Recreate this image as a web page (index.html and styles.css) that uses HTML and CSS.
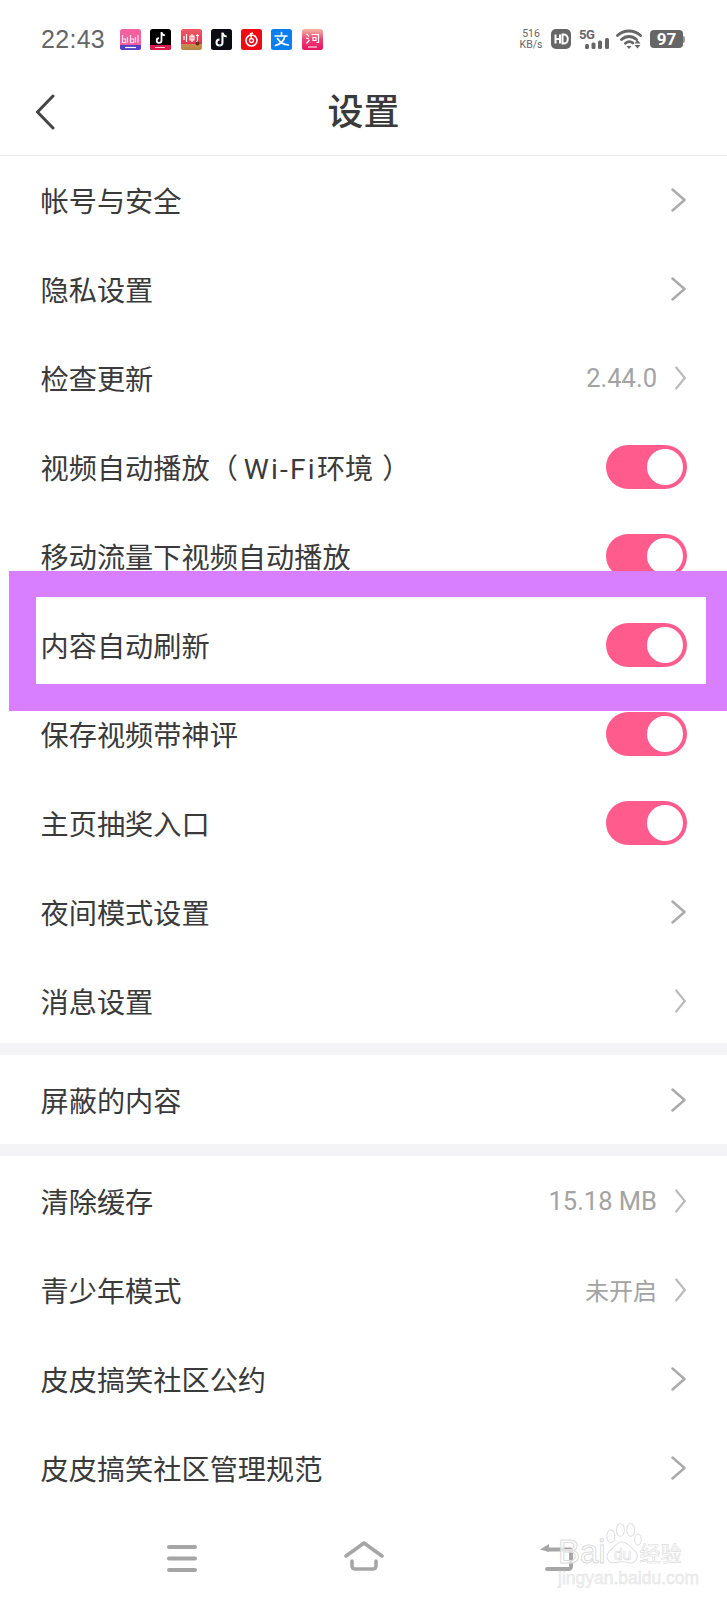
FILE: index.html
```html
<!DOCTYPE html>
<html lang="zh-CN">
<head>
<meta charset="UTF-8">
<meta name="viewport" content="width=device-width, initial-scale=1.0">
<title>设置</title>
<link rel="stylesheet" href="styles.css">
</head>
<body>

<svg class="defs" width="0" height="0">
  <defs>
    <linearGradient id="taobao" x1="0" y1="0" x2="0" y2="1"><stop offset="0" stop-color="#f8b8a4"/><stop offset=".5" stop-color="#ee3f74"/><stop offset="1" stop-color="#e8125e"/></linearGradient>
    <linearGradient id="redbook" x1="0" y1="0" x2="0" y2="1"><stop offset="0" stop-color="#ee5a66"/><stop offset=".7" stop-color="#e63350"/><stop offset=".72" stop-color="#c4914e"/><stop offset="1" stop-color="#b98344"/></linearGradient>
  </defs>
  <symbol id="chevron" viewBox="0 0 15 24"><path d="M1.5 1.5 13.5 12 1.5 22.5" fill="none" stroke="currentColor" stroke-width="2.4" stroke-linecap="round" stroke-linejoin="round"/></symbol>
  <symbol id="chevron-thin" viewBox="0 0 11 24"><path d="M1.2 1.5 9.8 12 1.2 22.5" fill="none" stroke="currentColor" stroke-width="2.2" stroke-linecap="round" stroke-linejoin="round"/></symbol>
</svg>

<div class="status-bar">
  <span class="clock">22:43</span>
  <div class="app-icons">
    <svg class="app" viewBox="0 0 21 21"><rect width="21" height="21" rx="2.500" fill="#f6609f"/><path d="M0 16h21v2.500a2.500 2.500 0 0 1-2.500 2.500h-16A2.500 2.500 0 0 1 0 18.500z" fill="#5340c4"/><path d="M2.500 6v7.500h3.200V10H3M7.500 8v5.500M10.500 6v7.500h3.200V10H11M15.500 8v5.500M18 6v7.500" fill="none" stroke="#ffe3f0" stroke-width="1.100"/><path d="M5 18.500h11" stroke="#fff" stroke-width="1.200"/></svg>
    <svg class="app" viewBox="0 0 21 21"><rect width="21" height="21" rx="2.500" fill="#000"/><path d="M0 16h21v2.500a2.500 2.500 0 0 1-2.500 2.500h-16A2.500 2.500 0 0 1 0 18.500z" fill="#e0184a"/><path d="M11.500 3v8.500a2.400 2.400 0 1 1-2.400-2.400M11.500 3.200c.4 1.900 1.600 2.900 3.400 3.100" fill="none" stroke="#fff" stroke-width="1.800"/><path d="M5 18.500h10" stroke="#ffd0d8" stroke-width="1"/></svg>
    <svg class="app" viewBox="0 0 21 21"><rect width="21" height="21" rx="2.500" fill="url(#redbook)"/><path d="M3 7v4M5.500 5v8M9 7h4v4H9zM11 5v8M15 6.500h3M16.500 5v7l-1 1" fill="none" stroke="#fff" stroke-width="1.200"/><circle cx="16.500" cy="14.500" r="2" fill="#5f3518"/></svg>
    <svg class="app" viewBox="0 0 21 21"><rect width="21" height="21" rx="2.500" fill="#0b0b14"/><path d="M11.500 3.500v10a3 3 0 1 1-3-3M11.500 3.700c.5 2.300 2 3.500 4.200 3.700" fill="none" stroke="#fff" stroke-width="2"/><path d="M10.500 4v9.500a2.500 2.500 0 0 1-2.500 3" fill="none" stroke="#3ad6e0" stroke-width=".7"/></svg>
    <svg class="app" viewBox="0 0 21 21"><rect width="21" height="21" rx="2.500" fill="#ee0a14"/><circle cx="10.500" cy="11.500" r="5.500" fill="none" stroke="#fff" stroke-width="1.600"/><circle cx="10.500" cy="11.500" r="2" fill="none" stroke="#fff" stroke-width="1.300"/><path d="M12 3.800 9.500 4.800 10.500 9.500" fill="none" stroke="#fff" stroke-width="1.400"/></svg>
    <svg class="app" viewBox="0 0 21 21"><rect width="21" height="21" rx="2.500" fill="#0a7ff0"/><path d="M4 7h12M10.500 3.500V7M14 7c-1 4.500-4 8-9.500 9.500M6.500 9.500c2 3.500 6 6 11 6.500" fill="none" stroke="#fff" stroke-width="1.600" stroke-linecap="round"/></svg>
    <svg class="app" viewBox="0 0 21 21"><rect width="21" height="21" rx="2.500" fill="url(#taobao)"/><path d="M4.500 5c1.500.8 2 1.500 2.500 2.500M4 9l3 1M4.500 14.500 7.500 11M9.500 5.500h7v8h-2M11 8.500h3v3h-3zM6 18h9" fill="none" stroke="#fff" stroke-width="1.200"/></svg>
  </div>
  <div class="status-right">
    <div class="speed"><span>516</span><span>KB/s</span></div>
    <svg class="hd" viewBox="0 0 20 20"><rect width="20" height="20" rx="5" fill="#666"/><path d="M4.500 5.500v9M9 5.500v9M4.500 10H9M11.500 5.500v9h1.500c5 0 5-9 0-9z" fill="none" stroke="#fff" stroke-width="2"/></svg>
    <div class="signal">
      <span class="five-g">5G</span>
      <svg class="bars" viewBox="0 0 24 11"><rect x="0" y="6" width="4" height="5" rx="1.500"/><rect x="6.500" y="4.500" width="4" height="6.500" rx="1.500"/><rect x="13" y="2.500" width="4" height="8.500" rx="1.500"/><rect x="20" y="0" width="4" height="11" rx="1.500"/></svg>
    </div>
    <svg class="wifi" viewBox="0 0 27 20"><path d="M1.500 6.500C8 .5 18 .5 24.500 6.500M5.500 10.500c4.500-4 10.500-4 15 0M9.500 14.300c2.300-2 5-2 7.300-.4" fill="none" stroke="#666" stroke-width="2.800" stroke-linecap="round"/><path d="M10.500 17h5L13 20zM18.500 14.500h6l-3-3.500zM18.500 16h6l-3 3.500z" fill="#666"/></svg>
    <div class="battery"><span class="battery-level">97</span><span class="battery-nub"></span></div>
  </div>
</div>

<div class="top-bar">
  <svg class="back" viewBox="0 0 20 36"><path d="M18 2 2.500 18 18 34" fill="none" stroke="#444" stroke-width="3" stroke-linecap="round" stroke-linejoin="round"/></svg>
  <h1>设置</h1>
</div>

<div class="section first">
  <div class="row"><span class="label">帐号与安全</span><svg class="chev"><use href="#chevron"/></svg></div>
  <div class="row"><span class="label">隐私设置</span><svg class="chev"><use href="#chevron"/></svg></div>
  <div class="row"><span class="label">检查更新</span><span class="value">2.44.0</span><svg class="chev thin"><use href="#chevron-thin"/></svg></div>
  <div class="row"><span class="label">视频自动播放（<span class="latin">Wi-Fi</span>环境<span class="gap"> </span>）</span><span class="toggle"></span></div>
  <div class="row"><span class="label">移动流量下视频自动播放</span><span class="toggle"></span></div>
  <div class="row"><span class="label">内容自动刷新</span><span class="toggle"></span></div>
  <div class="row"><span class="label">保存视频带神评</span><span class="toggle"></span></div>
  <div class="row"><span class="label">主页抽奖入口</span><span class="toggle"></span></div>
  <div class="row"><span class="label">夜间模式设置</span><svg class="chev"><use href="#chevron"/></svg></div>
  <div class="row"><span class="label">消息设置</span><svg class="chev thin"><use href="#chevron-thin"/></svg></div>
</div>

<div class="section">
  <div class="row"><span class="label">屏蔽的内容</span><svg class="chev"><use href="#chevron"/></svg></div>
</div>

<div class="section">
  <div class="row"><span class="label">清除缓存</span><span class="value">15.18 MB</span><svg class="chev thin"><use href="#chevron-thin"/></svg></div>
  <div class="row"><span class="label">青少年模式</span><span class="value small">未开启</span><svg class="chev thin"><use href="#chevron-thin"/></svg></div>
  <div class="row"><span class="label">皮皮搞笑社区公约</span><svg class="chev"><use href="#chevron"/></svg></div>
  <div class="row"><span class="label">皮皮搞笑社区管理规范</span><svg class="chev"><use href="#chevron"/></svg></div>
</div>

<div class="nav-bar">
  <svg class="nav-menu" viewBox="0 0 30 27"><path d="M2 2h26M2 13.500h26M2 25h26" fill="none" stroke="#a6a6a6" stroke-width="4" stroke-linecap="round"/></svg>
  <svg class="nav-home" viewBox="0 0 40 30"><path d="M2 15 20 2l18 13M8 20v5a3 3 0 0 0 3 3h18a3 3 0 0 0 3-3v-5" fill="none" stroke="#a6a6a6" stroke-width="3.600" stroke-linecap="round" stroke-linejoin="round"/></svg>
  <svg class="nav-return" viewBox="0 0 34 28"><path d="M9 6.500h23v17a2.500 2.500 0 0 1-2.500 2.500H8" fill="none" stroke="#a6a6a6" stroke-width="4" stroke-linecap="round" stroke-linejoin="round"/><path d="M10 1 1 6.500 10 9z" fill="#a6a6a6"/></svg>
</div>

<!-- annotation drawn over the screenshot -->
<div class="highlight"></div>

<div class="watermark">
  <svg class="paw" viewBox="0 0 50 52"><g fill="#fff" fill-opacity=".7" stroke="#e0e0e0" stroke-width="1.300"><ellipse cx="11" cy="17" rx="5" ry="8"/><ellipse cx="23" cy="9" rx="5" ry="8"/><ellipse cx="36" cy="9" rx="5" ry="8"/><ellipse cx="45" cy="21" rx="4" ry="7"/><path d="M25 24c-7 0-10 7-16 12-6 6-1 15 6 14 6-1 13-2 19 0 8 2 13-7 8-14-6-5-10-12-17-12z"/></g></svg>
  <div class="mark-line"><span class="mark-bai">Bai</span><span class="mark-du">du</span><span class="mark-cn">经验</span></div>
  <div class="mark-url">jingyan.baidu.com</div>
</div>

</body>
</html>
```

FILE: styles.css
```css
* {
  box-sizing: border-box;
}

html, body {
  margin: 0;
  height: 100%;
}

body {
  position: relative;
  width: 727px;
  height: 1600px;
  overflow: hidden;
  display: flex;
  flex-direction: column;
  background: #fff;
  color: #333;
  font-family: Roboto, "Noto Sans CJK SC", sans-serif;
}

.defs {
  position: absolute;
}

/* status bar */
.status-bar {
  height: 78px;
  flex: none;
  display: flex;
  align-items: center;
  padding: 0 42px 0 41px;
  color: #666;
}

.clock {
  width: 79px;
  font-family: "Liberation Sans", sans-serif;
  font-size: 25px;
  letter-spacing: 0.3px;
}

.app-icons {
  display: flex;
  gap: 9.3px;
}

.app {
  width: 21px;
  height: 21px;
}

.status-right {
  margin-left: auto;
  display: flex;
  align-items: center;
}

.speed {
  width: 24px;
  display: flex;
  flex-direction: column;
  align-items: center;
  font-size: 10.5px;
  line-height: 11px;
  margin-right: 8px;
  white-space: nowrap;
}

.hd {
  width: 20px;
  height: 20px;
  margin-right: 8px;
}

.signal {
  position: relative;
  width: 30px;
  height: 20px;
  margin-right: 7px;
}

.five-g {
  position: absolute;
  left: 0;
  top: -2px;
  font-size: 13px;
  font-weight: 700;
  letter-spacing: -0.5px;
}

.bars {
  position: absolute;
  right: 0;
  bottom: 0;
  width: 24px;
  height: 11px;
  fill: #666;
}

.wifi {
  width: 27px;
  height: 20px;
  margin-right: 7px;
}

.battery {
  display: flex;
  align-items: center;
}

.battery-level {
  width: 33px;
  height: 18px;
  border-radius: 4px;
  background: #666;
  color: #fff;
  font-size: 17px;
  line-height: 18px;
  font-weight: 700;
  text-align: center;
}

.battery-nub {
  width: 2px;
  height: 7px;
  background: #999;
  border-radius: 0 2px 2px 0;
}

/* title */
.top-bar {
  position: relative;
  height: 78px;
  flex: none;
  display: flex;
  align-items: center;
  justify-content: center;
  padding-bottom: 8px;
  border-bottom: 1px solid #eee;
}

.top-bar h1 {
  margin: 0;
  font-size: 36px;
  line-height: 46px;
  font-weight: 500;
  color: #3a3a3a;
}

.back {
  position: absolute;
  left: 35px;
  top: 16px;
  width: 20px;
  height: 36px;
}

/* rows */
.section {
  flex: none;
  border-top: 12px solid #f4f4f7;
}

.section.first {
  border-top: 0;
  margin-top: -1px;
  margin-bottom: -2px;
}

.row {
  height: 89px;
  display: flex;
  align-items: center;
  padding: 0 41px 0 40.5px;
}

.label {
  font-size: 28.2px;
  color: #3a3a3a;
  white-space: pre;
}

.latin {
  margin-left: 6px;
  letter-spacing: 2.2px;
}

.gap {
  display: inline-block;
  width: 9px;
}

.value {
  margin-left: auto;
  margin-right: 18px;
  font-size: 25.5px;
  color: #a3a3a3;
}

.value.small {
  font-size: 24px;
}

.chev {
  width: 15px;
  height: 24px;
  margin-left: auto;
  color: #aaa;
}

.chev.thin {
  width: 11px;
  color: #bbb;
}

.value + .chev {
  margin-left: 0;
}

.toggle {
  position: relative;
  margin-left: auto;
  margin-right: -1px;
  width: 81px;
  height: 44px;
  border-radius: 22px;
  background: #ff5c8d;
}

.toggle::after {
  content: "";
  position: absolute;
  right: 4px;
  top: 4px;
  width: 36px;
  height: 36px;
  border-radius: 50%;
  background: #fff;
}

/* bottom navigation */
.nav-bar {
  margin-top: auto;
  height: 88px;
  flex: none;
  position: relative;
  display: flex;
  align-items: flex-start;
  padding: 32px 0 0 167px;
}

.nav-menu {
  width: 30px;
  height: 27px;
  margin-top: 1px;
}

.nav-home {
  width: 40px;
  height: 30px;
  margin-left: 147px;
  margin-top: -3px;
}

.nav-return {
  width: 34px;
  height: 28px;
  margin-left: 155px;
  margin-top: -1px;
}

/* overlays */
.highlight {
  position: absolute;
  left: 9px;
  top: 571px;
  width: 718px;
  height: 140px;
  border: solid #d87fff;
  border-width: 26px 21px 27px 27px;
}

.watermark {
  position: absolute;
  left: 558px;
  top: 1522px;
  width: 132px;
  height: 62px;
  font-family: "Liberation Sans", sans-serif;
  color: rgba(255, 255, 255, 0.7);
  -webkit-text-stroke: 1px #dcdcdc;
}

.paw {
  position: absolute;
  left: 44px;
  top: 0;
  width: 40px;
  height: 43px;
}

.mark-line {
  position: absolute;
  left: 0;
  top: 17px;
  width: 132px;
  height: 26px;
  line-height: 26px;
  display: flex;
}

.mark-bai {
  font-size: 33px;
}

.mark-du {
  margin-left: 8px;
  margin-top: 3px;
  font-size: 16px;
  -webkit-text-stroke: 0.6px #dcdcdc;
}

.mark-cn {
  margin-left: 8px;
  font-family: "Noto Sans CJK SC", sans-serif;
  font-size: 21px;
  -webkit-text-stroke: 0.6px #dcdcdc;
  white-space: nowrap;
}

.mark-url {
  position: absolute;
  left: 0;
  top: 48px;
  line-height: 16px;
  font-size: 17.5px;
  color: #f0f0f0;
  -webkit-text-stroke: 0.4px #e2e2e2;
}
```
